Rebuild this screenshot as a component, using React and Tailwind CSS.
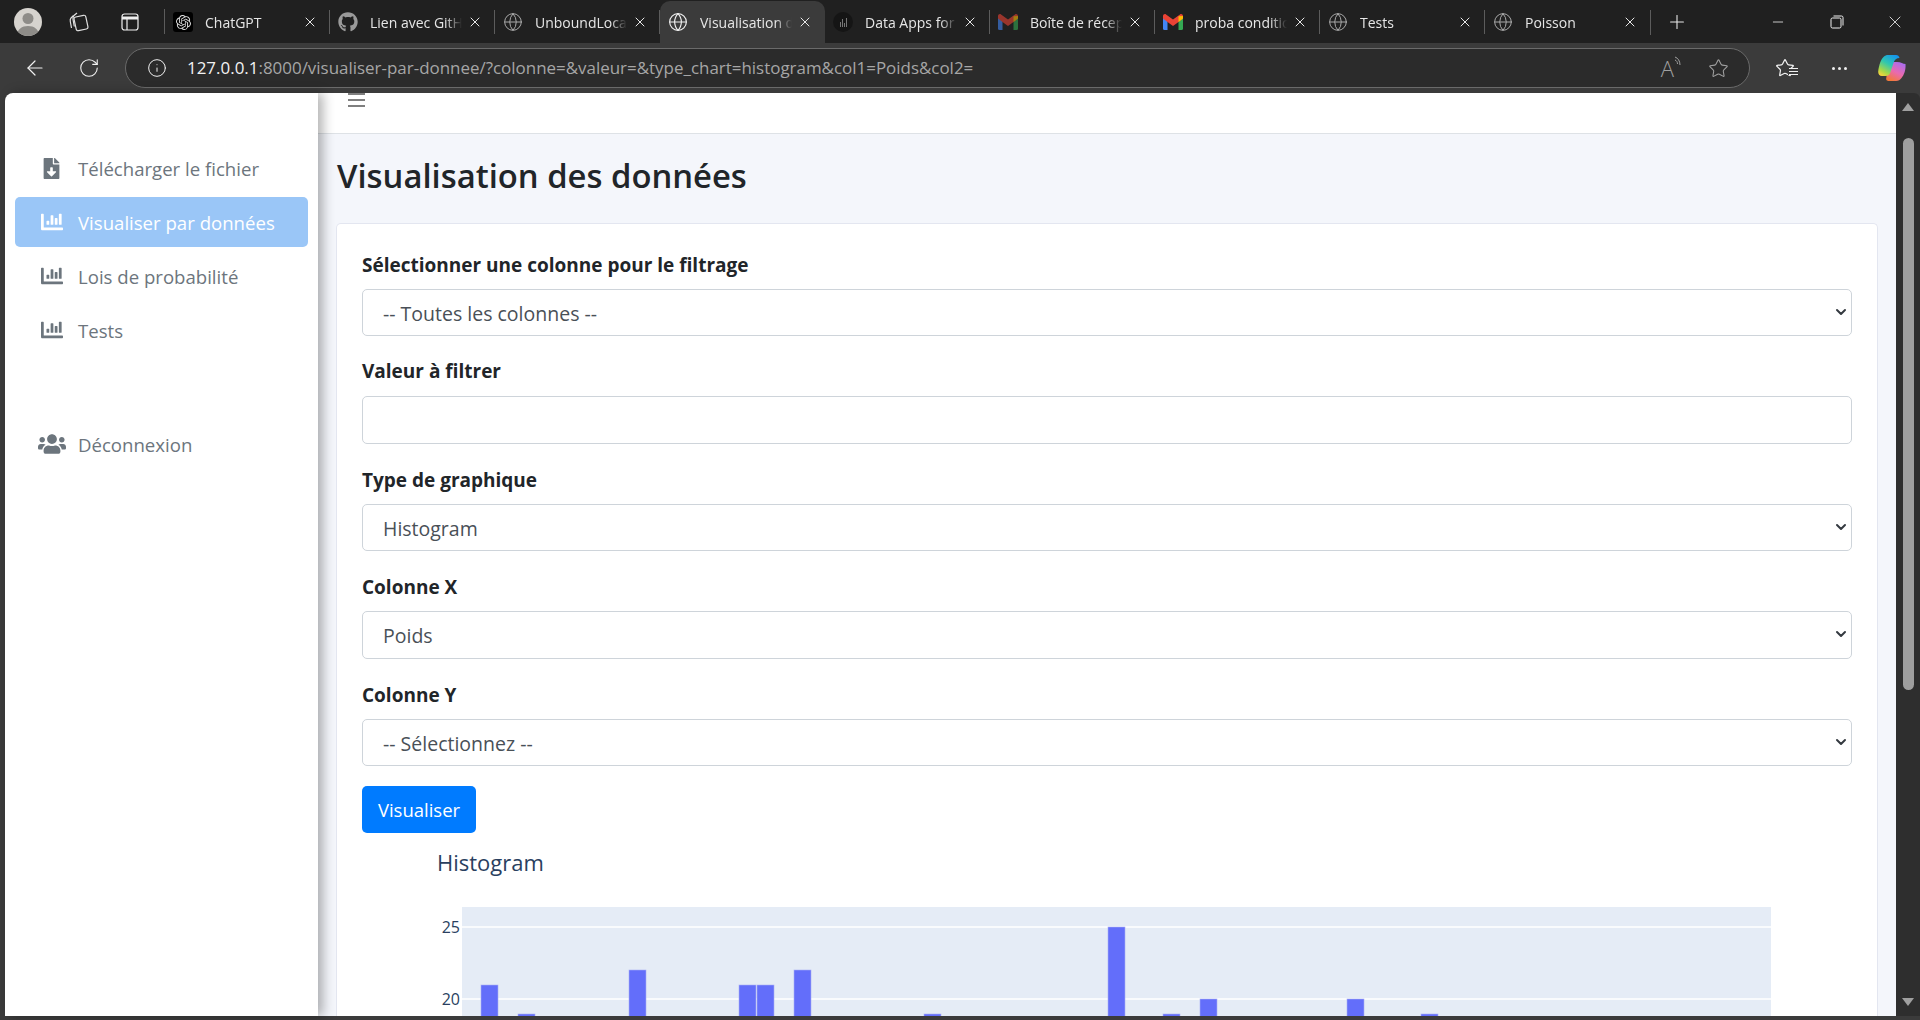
import React from "react";
import { FaFileDownload, FaChartBar, FaUsers, FaGithub } from "react-icons/fa";
import { SiOpenai } from "react-icons/si";
import { ArrowLeft, RotateCw, Info, Star, Plus, Minus, X, Globe, ChevronDown } from "lucide-react";

const pageFont = "font-['Open_Sans','Noto_Sans',sans-serif]";

function Gmail({ dim }) {
    return (
        <svg width="20" height="16" viewBox="0 0 20 16" className={dim ? "opacity-60" : ""}>
            <path d="M0 3v11.5A1.5 1.5 0 0 0 1.500 16H4.500V7z" fill="#4285f4" />
            <path d="M20 3v11.5a1.500 1.500 0 0 1-1.500 1.500H15.500V7z" fill="#34a853" />
            <path d="M4.500 8 0 4.500V2C0 .4 1.800-.5 3 .4L10 5.600 17 .4c1.200-.9 3 0 3 1.600v2.500L15.500 8 10 12z" fill="#ea4335" />
            <path d="M15.500 2.200 20 2v2.500L15.500 8z" fill="#fbbc04" />
        </svg>
    );
}

function DataAppsIcon() {
    return (
        <span className="flex h-[20px] w-[20px] items-end justify-center gap-[1px] rounded-full bg-[#151515] pb-[5px]">
            <span className="h-[5px] w-[1px] bg-[#777]" />
            <span className="h-[8px] w-[1px] bg-[#777]" />
            <span className="h-[4px] w-[1px] bg-[#777]" />
            <span className="h-[9px] w-[1px] bg-[#777]" />
        </span>
    );
}

const tabs = [
    { title: "ChatGPT", icon: <span className="flex h-[20px] w-[20px] items-center justify-center rounded-[3px] bg-black"><SiOpenai size={15} color="#ddd" /></span> },
    { title: "Lien avec GitHub", icon: <FaGithub size={20} color="#9a9a9a" /> },
    { title: "UnboundLocalError", icon: <Globe size={20} strokeWidth={1.2} color="#a8a8a8" /> },
    { title: "Visualisation des données", icon: <Globe size={20} strokeWidth={1.4} color="#f0f0f0" />, active: true },
    { title: "Data Apps for", icon: <DataAppsIcon /> },
    { title: "Boîte de réception", icon: <Gmail dim /> },
    { title: "proba conditionnelle", icon: <Gmail /> },
    { title: "Tests", icon: <Globe size={20} strokeWidth={1.2} color="#a8a8a8" /> },
    { title: "Poisson", icon: <Globe size={20} strokeWidth={1.2} color="#a8a8a8" /> },
];

function Tab({ tab, last }) {
    return (
        <div className={`relative flex h-full w-[165px] shrink-0 items-center pl-[8px] pr-[12px] ${tab.active ? "rounded-t-[10px] bg-[#3b3b3b]" : ""}`}>
            <span className="flex w-[20px] shrink-0 justify-center">{tab.icon}</span>
            <span className="ml-[12px] w-[92px] overflow-hidden whitespace-nowrap text-[14px] text-[#e6e6e6] [mask-image:linear-gradient(to_right,black_82%,transparent)]">{tab.title}</span>
            <X size={16} strokeWidth={1.500} color="#e8e8e8" className="ml-auto shrink-0" />
            {!tab.active && !last && <span className="absolute right-0 top-[9px] h-[24px] w-[1px] bg-[#5c5c5c]" />}
        </div>
    );
}

function TabStrip() {
    return (
        <div className="flex h-[43px] shrink-0 items-center bg-[#202020] font-['Open_Sans',sans-serif]">
            <div className="ml-[14px] flex h-[28px] w-[28px] items-end justify-center overflow-hidden rounded-full bg-[#d6d3ce]">
                <svg width="28" height="28" viewBox="0 0 28 28">
                    <circle cx="14" cy="10.500" r="5.500" fill="#8e8c88" />
                    <path d="M3 28c0-7 5-10 11-10s11 3 11 10z" fill="#8e8c88" />
                </svg>
            </div>
            <svg width="22" height="22" viewBox="0 0 22 22" fill="none" stroke="#e0e0e0" strokeWidth="1.200" className="ml-[25px]">
                <rect x="8" y="5" width="12" height="14" rx="2" transform="rotate(-12 14 12)" />
                <path d="M6.500 4.500 4 7c-1 1-1 2-.7 3.500l1.200 6.500" />
                <path d="M10 2 7 4.500C6 5.500 5.800 7 6 8.500l1.300 7" />
            </svg>
            <svg width="18" height="18" viewBox="0 0 18 18" fill="none" stroke="#f0f0f0" strokeWidth="1.200" className="ml-[32px]">
                <rect x="1" y="1" width="16" height="16" rx="2.500" />
                <path d="M1 5h16" strokeWidth="3" />
                <path d="M6 5v12" />
            </svg>
            <span className="ml-[25px] h-[25px] w-[1px] bg-[#5c5c5c]" />
            <div className="flex h-full items-center self-end pt-[1px]">
                {tabs.map((t, i) => (
                    <Tab key={t.title} tab={t} last={i === tabs.length - 1} />
                ))}
                <span className="h-[25px] w-[1px] bg-[#5c5c5c]" />
            </div>
            <Plus size={22} strokeWidth={1.200} color="#e8e8e8" className="ml-[15px]" />
            <Minus size={16} strokeWidth={1.200} color="#f0f0f0" className="ml-[82px]" />
            <svg width="14" height="14" viewBox="0 0 14 14" fill="none" stroke="#f0f0f0" strokeWidth="1" className="ml-[44px]">
                <rect x="1" y="3" width="10" height="10" rx="1.500" />
                <path d="M3.500 1h8A1.500 1.500 0 0 1 13 2.500v8" />
            </svg>
            <X size={20} strokeWidth={1} color="#f0f0f0" className="ml-[41px]" />
        </div>
    );
}

function Copilot() {
    return (
        <svg width="28" height="26" viewBox="0 0 28 26">
            <defs>
                <linearGradient id="cpA" x1="0.8" y1="0" x2="0.2" y2="1">
                    <stop offset="0" stopColor="#1493ee" />
                    <stop offset="0.45" stopColor="#2fc7b0" />
                    <stop offset="0.8" stopColor="#a5d84a" />
                    <stop offset="1" stopColor="#f4d43c" />
                </linearGradient>
                <linearGradient id="cpB" x1="0.8" y1="0" x2="0.3" y2="1">
                    <stop offset="0" stopColor="#a56cf2" />
                    <stop offset="0.55" stopColor="#e96aaf" />
                    <stop offset="1" stopColor="#f3793a" />
                </linearGradient>
            </defs>
            <path d="M8 7h11c4 0 6 2 8.500 2 .5 6-1.500 11-4 14-1.500 2-3 3-5.500 3h-7c-2 0-3.500-1-2.500-4z" fill="url(#cpB)" />
            <path d="M10 0h8c2 0 3 1 3.500 3-3 0-5 1.500-6 5l-3 9c-1 3-2.500 4-5 4H4C1.500 21 0 19 .2 16.500 1 10 3 4 5.500 2 7 .5 8.500 0 10 0z" fill="url(#cpA)" />
        </svg>
    );
}

function Toolbar() {
    return (
        <div className="flex h-[50px] shrink-0 items-center bg-[#3b3b3b] font-['Open_Sans',sans-serif]">
            <ArrowLeft size={24} strokeWidth={1.200} color="#f0f0f0" className="ml-[23px]" />
            <RotateCw size={22} strokeWidth={1.200} color="#f0f0f0" className="ml-[31px]" />
            <div className="ml-[25px] flex h-[40px] w-[1625px] items-center rounded-full border border-[#6a6a6a] bg-[#2b2b2b] pl-[21px]">
                <Info size={20} strokeWidth={1.200} color="#f0f0f0" />
                <span className="ml-[20px] whitespace-nowrap text-[16.950px] text-[#a6a6a6]">
                    <span className="text-[#f2f2f2]">127.0.0.1</span>:8000/visualiser-par-donnee/?colonne=&amp;valeur=&amp;type_chart=histogram&amp;col1=Poids&amp;col2=
                </span>
                <span className="ml-auto flex items-start">
                    <span className="text-[22px] font-light leading-[24px] text-[#a0a0a0]">A</span>
                    <svg width="7" height="10" viewBox="0 0 7 10" fill="none" stroke="#a0a0a0" strokeWidth="1">
                        <path d="M1 1c3 1 5 4 5 8M1 4c1.500.5 2.500 2 2.500 4" />
                    </svg>
                </span>
                <Star size={21} strokeWidth={1.200} color="#a0a0a0" className="ml-[27px] mr-[20px]" />
            </div>
            <span className="relative ml-[25px] flex">
                <Star size={20} strokeWidth={1.500} color="#f0f0f0" />
                <span className="absolute -right-[3px] bottom-[3px] flex flex-col gap-[2px] bg-[#3b3b3b] pl-[1px]">
                    <span className="h-[1px] w-[9px] bg-[#f0f0f0]" />
                    <span className="h-[1px] w-[9px] bg-[#f0f0f0]" />
                    <span className="h-[1px] w-[9px] bg-[#f0f0f0]" />
                </span>
            </span>
            <span className="ml-[37px] flex gap-[3px]">
                <span className="h-[3px] w-[3px] rounded-full bg-[#f0f0f0]" />
                <span className="h-[3px] w-[3px] rounded-full bg-[#f0f0f0]" />
                <span className="h-[3px] w-[3px] rounded-full bg-[#f0f0f0]" />
            </span>
            <span className="ml-[31px]"><Copilot /></span>
        </div>
    );
}

const navItems = [
    { label: "Télécharger le fichier", icon: <FaFileDownload size={21} /> },
    { label: "Visualiser par données", icon: <FaChartBar size={22} />, active: true },
    { label: "Lois de probabilité", icon: <FaChartBar size={22} /> },
    { label: "Tests", icon: <FaChartBar size={22} /> },
];

function NavItem({ item }) {
    return (
        <a className={`flex h-[50px] items-center rounded-[5px] text-[18.600px] ${item.active ? "bg-[#9ac6f7] text-white" : "text-[#6c757d]"}`}>
            <span className="flex w-[63px] shrink-0 justify-center pl-[10px]">{item.icon}</span>
            <span className="mt-[2px] whitespace-nowrap">{item.label}</span>
        </a>
    );
}

function Sidebar() {
    return (
        <aside className="relative z-10 flex w-[313px] shrink-0 flex-col rounded-tl-[8px] bg-white px-[10px] pt-[50px] shadow-[5px_0_12px_rgba(0,0,0,0.3)]">
            <div className="flex flex-col gap-[4px]">
                {navItems.map((item) => (
                    <NavItem key={item.label} item={item} />
                ))}
            </div>
            <div className="mt-[64px]">
                <NavItem item={{ label: "Déconnexion", icon: <FaUsers size={28} /> }} />
            </div>
        </aside>
    );
}

function SelectField({ label, value, options, className, tall }) {
    return (
        <div className={className}>
            <label className="block text-[19px] font-bold leading-[24px] text-[#212529]">{label}</label>
            <div className="relative mt-[12px]">
                <select
                    defaultValue={value}
                    className={`block w-full appearance-none rounded-[5px] border border-[#ced4da] bg-white px-[20px] pt-[2px] text-[19.500px] text-[#495057] ${tall ? "h-[48px]" : "h-[47px]"}`}
                >
                    {options.map((o) => (
                        <option key={o}>{o}</option>
                    ))}
                </select>
                <ChevronDown size={16} strokeWidth={3} color="#343a40" className="pointer-events-none absolute right-[3px] top-[15px]" />
            </div>
        </div>
    );
}

// bar x, bar top (in px of the chart svg)
const bars = [
    [119, 142], [156, 171], [267, 127], [377, 142], [395, 142], [432, 127], [562, 171],
    [746, 84], [801, 171], [838, 156], [985, 156], [1059, 171],
];

function Histogram() {
    return (
        <svg width="1490" height="230" className="mt-[10px] block">
            <text x="75" y="28" fontSize="22" fill="#2a3f5f" fontFamily="'Open Sans', sans-serif">Histogram</text>
            <rect x="100" y="64" width="1309" height="166" fill="#e5ecf6" />
            <path d="M100 84H1409M100 156H1409M100 228H1409" stroke="#fff" strokeWidth="1.500" />
            {bars.map(([x, y]) => (
                <rect key={x} x={x} y={y} width="17" height={230 - y} fill="#636efa" stroke="#a9aff5" strokeWidth="0.600" />
            ))}
            <text x="98" y="90" fontSize="16" textAnchor="end" fill="#2a3f5f" fontFamily="'Open Sans', sans-serif">25</text>
            <text x="98" y="162" fontSize="16" textAnchor="end" fill="#2a3f5f" fontFamily="'Open Sans', sans-serif">20</text>
        </svg>
    );
}

function Main() {
    return (
        <main className="flex min-w-0 flex-1 flex-col overflow-hidden bg-[#f4f6fb]">
            <header className="flex h-[41px] shrink-0 flex-col gap-[4px] border-b border-[#dee2e6] bg-white pl-[30px]">
                <span className="h-[2px] w-[17px] bg-[#7f7f7f]" />
                <span className="h-[2px] w-[17px] bg-[#7f7f7f]" />
                <span className="h-[2px] w-[17px] bg-[#7f7f7f]" />
            </header>
            <div className="flex flex-1 flex-col overflow-hidden pl-[18px] pr-[18px]">
                <h1 className="mt-[21px] ml-[1px] text-[32.800px] font-semibold leading-[42px] text-[#212529]">Visualisation des données</h1>
                <div className="mt-[26px] flex-1 rounded-t-[5px] border border-b-0 border-[#e3e6f0] bg-white pl-[25px] pr-[25px] pt-[29px]">
                    <SelectField label="Sélectionner une colonne pour le filtrage" value="-- Toutes les colonnes --" options={["-- Toutes les colonnes --"]} />
                    <div className="mt-[23px]">
                        <label className="block text-[19px] font-bold leading-[24px] text-[#212529]">Valeur à filtrer</label>
                        <input type="text" className="mt-[13px] block h-[48px] w-full rounded-[5px] border border-[#ced4da] bg-white" />
                    </div>
                    <SelectField className="mt-[24px]" label="Type de graphique" value="Histogram" options={["Histogram"]} />
                    <SelectField className="mt-[24px]" label="Colonne X" value="Poids" options={["Poids"]} tall />
                    <SelectField className="mt-[24px]" label="Colonne Y" value="-- Sélectionnez --" options={["-- Sélectionnez --"]} />
                    <button className="mt-[20px] block h-[47px] w-[114px] rounded-[5px] bg-[#007bff] text-[18.500px] text-white">Visualiser</button>
                    <Histogram />
                </div>
            </div>
        </main>
    );
}

function ScrollBar() {
    return (
        <div className="flex w-[24px] shrink-0 flex-col items-center rounded-tr-[6px] bg-[#2e2e2e]">
            <span className="mt-[10px] h-0 w-0 border-x-[6px] border-b-[8px] border-x-transparent border-b-[#a0a0a0]" />
            <span className="mt-[27px] h-[552px] w-[11px] rounded-full bg-[#9f9f9f]" />
            <span className="mt-auto mb-[10px] h-0 w-0 border-x-[6px] border-t-[8px] border-x-transparent border-t-[#a0a0a0]" />
        </div>
    );
}

export default function App() {
    return (
        <div className="flex h-screen flex-col overflow-hidden bg-[#3b3b3b]">
            <TabStrip />
            <Toolbar />
            <div className={`flex min-h-0 flex-1 pb-[4px] pl-[5px] ${pageFont}`}>
                <Sidebar />
                <Main />
                <ScrollBar />
            </div>
        </div>
    );
}
